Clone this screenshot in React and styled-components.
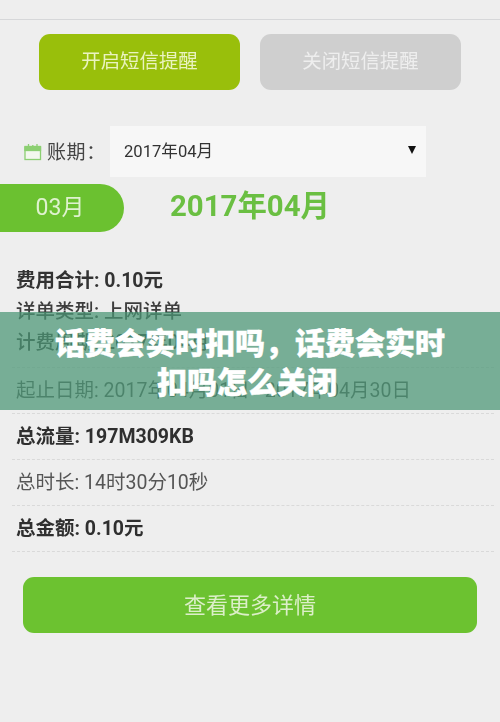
import React from "react";
import styled, { createGlobalStyle } from "styled-components";

const Global = createGlobalStyle`
  html, body { margin: 0; padding: 0; background: #eeeeee; }
  * { box-sizing: border-box; }
`;
const Page = styled.div`
  position: relative; width: 500px; height: 722px; overflow: hidden; background: #eeeeee;
  font-family: Roboto, "Noto Sans CJK SC", sans-serif;
`;
const Shot = styled.div`
  height: 722px; padding-top: 19px; filter: blur(0.5px);
`;
const TopRule = styled.div`height: 1px; background: #d6d7d9;`;
const Toggles = styled.div`
  display: flex; gap: 20px; padding: 14px 0 0 39px;
`;
const Toggle = styled.div`
  width: 201px; height: 56px; border-radius: 11px; padding-bottom: 5px;
  background: ${p => p.$on ? "#99bf0b" : "#cfcfcf"};
  color: ${p => p.$on ? "#eaf3c0" : "#eeeeee"};
  font-size: 19.4px; display: flex; align-items: center; justify-content: center;
`;
const Period = styled.div`
  display: flex; align-items: center; height: 51px; margin-top: 36px; padding-left: 24px;
`;
const PeriodLabel = styled.span`
  width: 68px; padding: 0 0 2px 5px; font-size: 19px; color: #444; letter-spacing: 0.6px;
`;
const Select = styled.div`
  width: 316px; height: 51px; background: #f7f7f7; display: flex; align-items: center;
  justify-content: space-between; padding: 0 10px 3px 14px; font-size: 16.6px; color: #333;
`;
const Caret = styled.span`
  width: 0; height: 0; border-left: 4px solid transparent; border-right: 4px solid transparent;
  border-top: 8px solid #111;
`;
const MonthRow = styled.div`
  display: flex; align-items: center; margin-top: 7px; height: 48px;
`;
const MonthTab = styled.div`
  width: 124px; height: 48px; background: #6bc130; border-radius: 0 24px 24px 0; color: #dff2cf;
  font-size: 23px; display: flex; align-items: center; justify-content: center; padding: 0 4px 6px 0;
`;
const MonthTitle = styled.div`
  margin-left: 46px; font-size: 29.4px; font-weight: 700; color: #6abf42; padding-bottom: 11px;
`;
const Summary = styled.div`
  padding: 33px 0 0 16px; display: flex; flex-direction: column;
`;
const SummaryLine = styled.div`
  height: 31px; line-height: 31px; font-size: 19.5px; color: ${p => p.$bold ? "#333" : "#3d3d3d"};
  font-weight: ${p => p.$bold ? 700 : 500};
`;
const Rows = styled.div`display: flex; flex-direction: column; margin-top: 9px;`;
const Row = styled.div`
  height: 46px; margin: 0 6px 0 12px; padding: 0 0 5px 4px; display: flex; align-items: center;
  font-size: 19.5px; white-space: pre; color: ${p => p.$bold ? "#2f2f2f" : "#555"};
  font-weight: ${p => p.$bold ? 700 : 400};
  border-top: 1px dashed #d9d9d9;
`;
const LastRule = styled.div`margin: 0 6px 0 12px; border-top: 1px dashed #d9d9d9;`;
const More = styled.div`
  margin: 25px 23px 0; height: 56px; border-radius: 11px; background: #6cc230; color: #dcefc8;
  font-size: 22px; padding-bottom: 4px; display: flex; align-items: center; justify-content: center;
`;
const Banner = styled.div`
  position: absolute; left: 0; top: 312px; width: 500px; height: 98px;
  background: rgba(74, 149, 116, 0.72); display: flex; align-items: center; justify-content: center;
`;
const BannerText = styled.h1`
  margin: 0; width: 400px; text-align: center; color: #fff; font-size: 30px; line-height: 39.5px;
  font-weight: 900; font-family: "Noto Sans CJK SC", sans-serif;
  -webkit-text-stroke: 0.4px #fff;
`;
const LineTail = styled.span`display: inline-block; width: 6px;`;

const CalendarIcon = () => (
  <svg width="18" height="18" viewBox="0 0 18 18" fill="none" stroke="#8ccf72" strokeWidth="1.3">
    <rect x="1" y="4" width="15.5" height="12.5" fill="#f3f7ee" />
    <rect x="1" y="3.5" width="15.5" height="4" fill="#8ccf72" />
    <path d="M4.5 1v3M13 1v3M8.8 2v2" />
  </svg>
);

export default function App() {
  return (
    <Page>
      <Global />
      <Shot>
        <TopRule />
        <Toggles>
          <Toggle $on>开启短信提醒</Toggle>
          <Toggle>关闭短信提醒</Toggle>
        </Toggles>
        <Period>
          <CalendarIcon />
          <PeriodLabel>账期：</PeriodLabel>
          <Select>2017年04月<Caret /></Select>
        </Period>
        <MonthRow>
          <MonthTab>03月</MonthTab>
          <MonthTitle>2017年04月</MonthTitle>
        </MonthRow>
        <Summary>
          <SummaryLine $bold>费用合计: 0.10元</SummaryLine>
          <SummaryLine>详单类型: 上网详单</SummaryLine>
          <SummaryLine>计费周期: 2017年04月</SummaryLine>
        </Summary>
        <Rows>
          <Row>起止日期: 2017年04月01日 - 2017年04月30日</Row>
          <Row $bold>总流量: 197M309KB</Row>
          <Row>总时长: 14时30分10秒</Row>
          <Row $bold>总金额: 0.10元</Row>
          <LastRule />
        </Rows>
        <More>查看更多详情</More>
      </Shot>
      <Banner>
        <BannerText>话费会实时扣吗，话费会实时扣吗怎么关闭<LineTail /></BannerText>
      </Banner>
    </Page>
  );
}
